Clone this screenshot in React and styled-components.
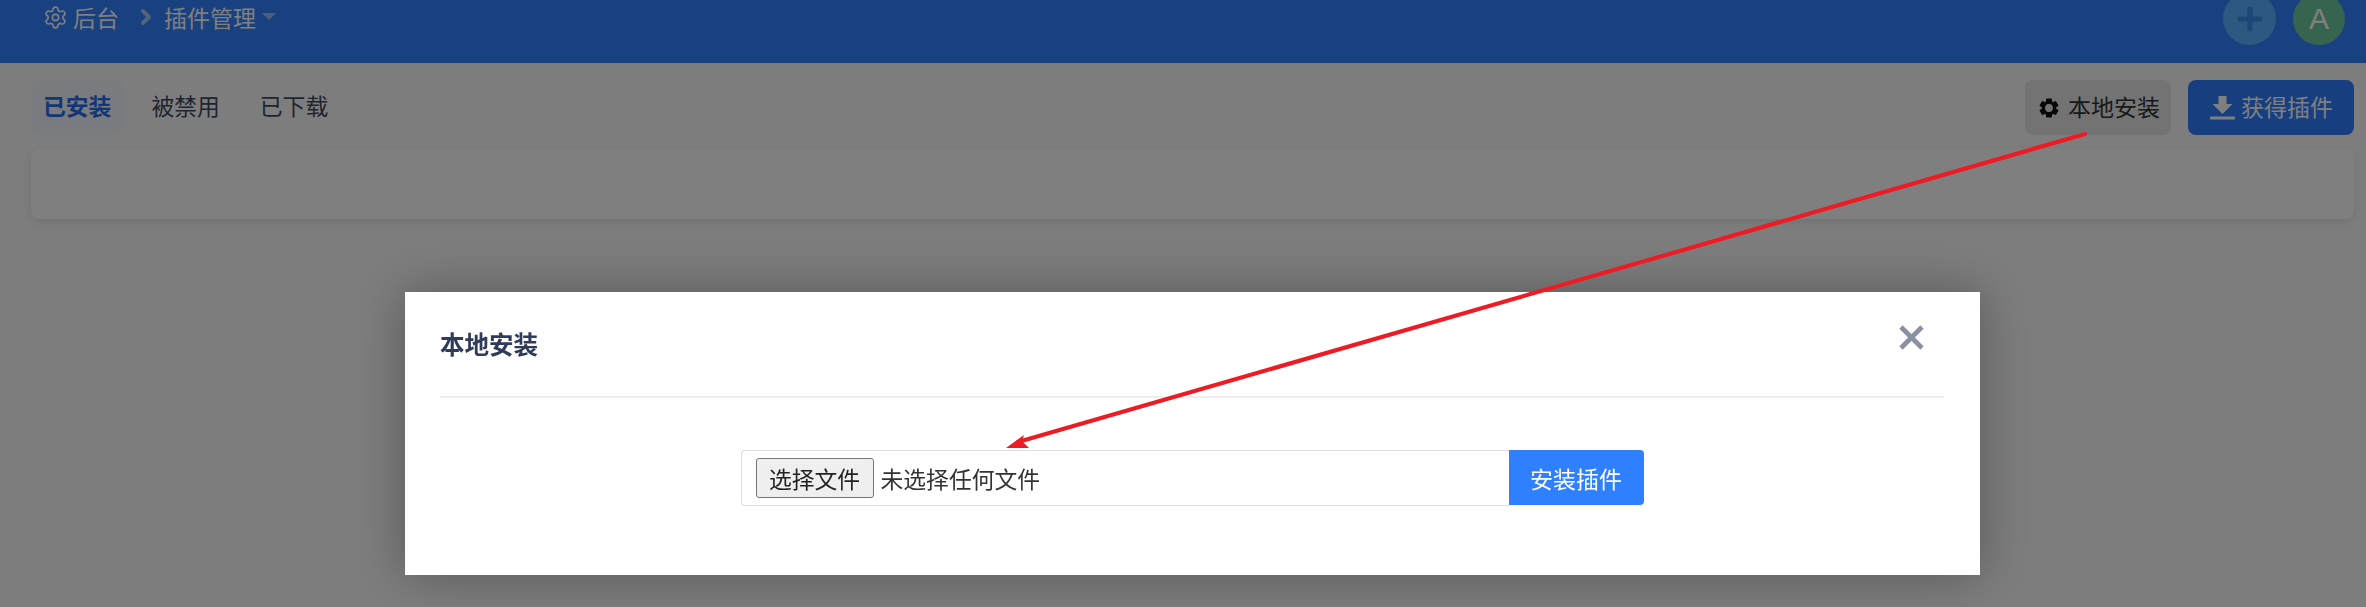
import React from "react";
import styled, { createGlobalStyle } from "styled-components";
import { Settings, ChevronRight, Plus } from "lucide-react";

const GlobalStyle = createGlobalStyle`
  html, body {
    margin: 0;
    height: 100%;
    overflow: hidden;
    background: #fbfbfc;
    font-family: "Liberation Sans", "Noto Sans CJK SC", sans-serif;
  }
`;

const Page = styled.div`
  margin-top: -8px;
`;

const Header = styled.header`
  height: 71px;
  background: #3380ff;
  display: flex;
  align-items: flex-start;
  justify-content: space-between;
  padding: 0 21px 0 43px;
  box-sizing: border-box;
`;

const Crumbs = styled.div`
  display: flex;
  align-items: center;
  height: 50px;
  color: #ffffff;
  font-size: 23px;
  svg {
    flex-shrink: 0;
  }
`;

const Crumb = styled.span`
  margin-left: ${(p) => p.$gap}px;
`;

const Caret = styled.i`
  width: 0;
  height: 0;
  margin: 0 0 2px 6px;
  border-left: 7px solid transparent;
  border-right: 7px solid transparent;
  border-top: 7px solid #9dbff5;
`;

const HeaderActions = styled.div`
  display: flex;
  align-items: center;
  gap: 17px;
`;

const Avatar = styled.div`
  width: ${(p) => p.$size}px;
  height: ${(p) => p.$size}px;
  border-radius: 50%;
  background: ${(p) => p.$bg};
  color: ${(p) => p.$color};
  display: flex;
  align-items: center;
  justify-content: center;
  font-size: 30px;
`;

const Toolbar = styled.div`
  display: flex;
  justify-content: space-between;
  padding: 17px 12px 0 31px;
`;

const Tabs = styled.div`
  display: flex;
  gap: 16px;
`;

const Tab = styled.div`
  height: 55px;
  padding: 0 12px 4px;
  box-sizing: border-box;
  display: flex;
  align-items: center;
  border-radius: 8px;
  font-size: 22.8px;
  font-weight: ${(p) => (p.$active ? 700 : 400)};
  color: ${(p) => (p.$active ? "#2a6ceb" : "#3f4a60")};
  background: ${(p) => (p.$active ? "#f3f6fc" : "transparent")};
`;

const Actions = styled.div`
  display: flex;
  gap: 17px;
`;

const ActionButton = styled.div`
  height: 55px;
  box-sizing: border-box;
  padding: ${(p) => p.$pad};
  display: flex;
  align-items: center;
  gap: ${(p) => p.$gap}px;
  border-radius: 8px;
  font-size: 23px;
  color: ${(p) => (p.$primary ? "#ffffff" : "#333333")};
  background: ${(p) => (p.$primary ? "#2f7dff" : "#e6e6e6")};
  svg {
    margin-top: 4px;
    flex-shrink: 0;
  }
`;

const EmptyCard = styled.div`
  height: 70px;
  margin: 14px 12px 0 31px;
  background: #ffffff;
  border-radius: 8px;
  box-shadow: 0 3px 10px rgba(0, 0, 0, 0.1);
`;

const Overlay = styled.div`
  position: fixed;
  inset: 0;
  background: rgba(0, 0, 0, 0.5);
  padding: 292px 0 0 405px;
`;

const Modal = styled.div`
  width: 1575px;
  height: 283px;
  box-sizing: border-box;
  padding: 0 36px 0 35px;
  background: #ffffff;
  box-shadow: 0 0 48px rgba(0, 0, 0, 0.3);
`;

const ModalHeader = styled.div`
  height: 106px;
  box-sizing: border-box;
  border-bottom: 2px solid #eeeeee;
  display: flex;
  align-items: center;
  justify-content: space-between;
  padding: 0 20px 0 0;
`;

const ModalTitle = styled.h3`
  margin: 0 0 2px;
  font-size: 24.5px;
  font-weight: 700;
  color: #2f3b59;
`;

const CloseIcon = styled.svg`
  width: 25px;
  height: 25px;
  margin-bottom: 14px;
`;

const UploadRow = styled.div`
  display: flex;
  justify-content: center;
  margin-top: 52px;
`;

const FileField = styled.div`
  width: 768px;
  height: 56px;
  box-sizing: border-box;
  display: flex;
  align-items: center;
  gap: 7px;
  padding-left: 14px;
  border: 1.5px solid #dddddd;
  border-right: none;
  border-radius: 4px 0 0 4px;
  font-size: 22.8px;
  color: #333333;
`;

const FileButton = styled.div`
  width: 118px;
  height: 40px;
  box-sizing: border-box;
  border: 1.5px solid #767676;
  border-radius: 3px;
  background: #efefef;
  color: #222222;
  display: flex;
  align-items: center;
  justify-content: center;
`;

const SubmitButton = styled.div`
  width: 135px;
  height: 55px;
  display: flex;
  align-items: center;
  justify-content: center;
  background: #2f80ff;
  color: #ffffff;
  font-size: 23px;
  border-radius: 0 4px 4px 0;
`;

const ArrowLayer = styled.svg`
  position: fixed;
  left: 0;
  top: 0;
  width: 2366px;
  height: 607px;
  pointer-events: none;
`;

function CogIcon() {
  const teeth = [0, 60, 120, 180, 240, 300];
  return (
    <svg width="20" height="20" viewBox="0 0 20 20">
      {teeth.map((a) => (
        <rect key={a} x="7" y="0.5" width="6" height="5" rx="1" fill="#111" transform={`rotate(${a} 10 10)`} />
      ))}
      <circle cx="10" cy="10" r="5.6" fill="none" stroke="#111" strokeWidth="3.4" />
    </svg>
  );
}

function DownloadIcon() {
  return (
    <svg width="25" height="24" viewBox="0 0 25 24">
      <path d="M8.500 0h8v8h6l-10 10L2.500 8h6z" fill="#fff" />
      <rect x="0" y="20.500" width="25" height="3" rx="1" fill="#fff" />
    </svg>
  );
}

export default function App() {
  return (
    <>
      <GlobalStyle />
      <Page>
        <Header>
          <Crumbs>
            <Settings size={25} strokeWidth={1.6} />
            <Crumb $gap={5}>后台</Crumb>
            <Crumb $gap={15} as={ChevronRight} size={24} strokeWidth={4} color="#a8c6f8" />
            <Crumb $gap={6}>插件管理</Crumb>
            <Caret />
          </Crumbs>
          <HeaderActions>
            <Avatar $size={53} $bg="#5ab0ff" $color="#3a8af0">
              <Plus size={34} strokeWidth={3.6} />
            </Avatar>
            <Avatar $size={52} $bg="#6fc89c" $color="#ffffff">A</Avatar>
          </HeaderActions>
        </Header>
        <Toolbar>
          <Tabs>
            <Tab $active>已安装</Tab>
            <Tab>被禁用</Tab>
            <Tab>已下载</Tab>
          </Tabs>
          <Actions>
            <ActionButton $pad="0 11px 4px 14px" $gap={9}>
              <CogIcon />
              本地安装
            </ActionButton>
            <ActionButton $primary $pad="0 21px 4px 22px" $gap={6}>
              <DownloadIcon />
              获得插件
            </ActionButton>
          </Actions>
        </Toolbar>
        <EmptyCard />
      </Page>
      <Overlay>
        <Modal>
          <ModalHeader>
            <ModalTitle>本地安装</ModalTitle>
            <CloseIcon viewBox="0 0 25 25">
              <path d="M2 2l21 21M23 2L2 23" stroke="#8a90a2" strokeWidth="4.6" fill="none" />
            </CloseIcon>
          </ModalHeader>
          <UploadRow>
            <FileField>
              <FileButton>选择文件</FileButton>
              未选择任何文件
            </FileField>
            <SubmitButton>安装插件</SubmitButton>
          </UploadRow>
        </Modal>
      </Overlay>
      <ArrowLayer viewBox="0 0 2366 607">
        <path d="M2085 134L1018 442" stroke="#ed1c24" strokeWidth="4.2" strokeLinecap="round" fill="none" />
        <path d="M1006 448L1024 435L1022 441L1029 448z" fill="#ed1c24" />
      </ArrowLayer>
    </>
  );
}
